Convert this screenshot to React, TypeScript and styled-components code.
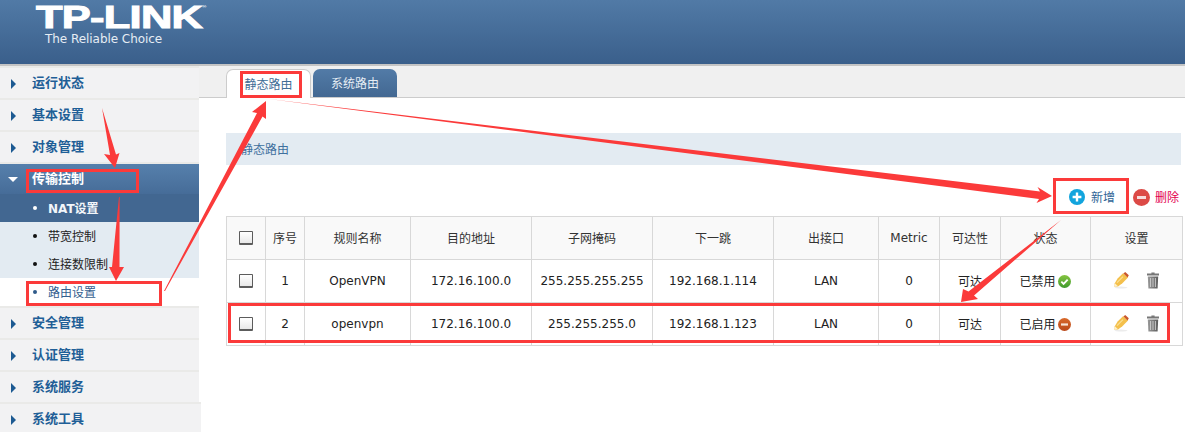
import React from 'react';
import styled, { createGlobalStyle } from 'styled-components';

const GlobalStyle = createGlobalStyle`
  html, body {
    margin: 0;
    padding: 0;
    background: #fff;
  }
  body {
    font-family: "DejaVu Sans", "Noto Sans CJK SC", sans-serif;
    font-size: 12px;
    color: #222;
  }
`;

const Page = styled.div`
  position: relative;
  width: 1185px;
  height: 432px;
  overflow: hidden;
  display: flex;
  flex-direction: column;
`;

const Header = styled.header`
  flex: none;
  height: 61px;
  padding: 3px 0 0 36px;
  border-bottom: 2px solid #c4c4c4;
  background: linear-gradient(#517aa6, #3a5f8b);
  color: #fff;
`;

const Logo = styled.div`
  height: 29px;
  font-family: "Liberation Sans", Arial, sans-serif;
  font-weight: 700;
  font-size: 31px;
  line-height: 29px;
  letter-spacing: -0.5px;
  -webkit-text-stroke: 1px #fff;
  transform: scaleX(1.4);
  transform-origin: left top;
  white-space: nowrap;
`;

const Registered = styled.sup`
  font-size: 4px;
  -webkit-text-stroke: 0;
  vertical-align: 20px;
  line-height: 0;
`;

const Tagline = styled.div`
  margin: 0 0 0 9px;
  font-size: 12px;
  line-height: 14px;
  letter-spacing: -0.05px;
  color: #e6edf4;
`;

const Body = styled.div`
  flex: 1;
  display: flex;
  min-height: 0;
`;

const Sidebar = styled.nav`
  flex: none;
  width: 199px;
  background: #f2f2f3;
`;

const MenuHead = styled.div<{ $open?: boolean }>`
  height: 30px;
  border-top: 2px solid #eaeae8;
  display: flex;
  align-items: center;
  padding-left: ${(p) => (p.$open ? 8 : 11)}px;
  gap: ${(p) => (p.$open ? 14 : 16)}px;
  font-size: 13px;
  font-weight: 700;
  color: ${(p) => (p.$open ? '#fff' : '#1f5f97')};
  background: ${(p) => (p.$open ? 'linear-gradient(#5680ac, #466c98)' : 'transparent')};
  &:last-child {
    margin-right: -2px;
    background: #f2f2f3;
  }
`;

const MenuLabel = styled.span`
  margin-top: -3px;
`;

const ArrowRight = styled.span`
  width: 0;
  height: 0;
  border-left: 5px solid #1d5a92;
  border-top: 5.5px solid transparent;
  border-bottom: 5.5px solid transparent;
  margin-top: 2px;
`;

const ArrowDown = styled.span`
  width: 0;
  height: 0;
  border-top: 5px solid #fff;
  border-left: 5px solid transparent;
  border-right: 5px solid transparent;
`;

const SubItem = styled.div<{ $kind: 'head' | 'plain' | 'active' }>`
  height: 28px;
  display: flex;
  align-items: center;
  padding-left: 33px;
  gap: 11px;
  font-weight: ${(p) => (p.$kind === 'head' ? 700 : 400)};
  color: ${(p) => (p.$kind === 'head' ? '#f2f6fa' : p.$kind === 'active' ? '#34608f' : '#222')};
  background: ${(p) => (p.$kind === 'head' ? '#426791' : p.$kind === 'active' ? '#fff' : '#e3ebf2')};
  &::before {
    content: '';
    width: 4px;
    height: 4px;
    border-radius: 50%;
    background: ${(p) => (p.$kind === 'head' ? '#fff' : p.$kind === 'active' ? '#2f5a8a' : '#111')};
  }
`;

const SubLabel = styled.span`
  margin-top: -2px;
`;

/* chinese glyphs sit a pixel low on the latin baseline */
const Cjk = styled.span`
  display: inline-block;
  transform: translateY(-1px);
`;

const Main = styled.main`
  flex: 1;
  min-width: 0;
  display: flex;
  flex-direction: column;
`;

const TabStrip = styled.div`
  flex: none;
  height: 28px;
  padding: 3px 0 0 27px;
  background: #f0f0f0;
  border-bottom: 1px solid #cccccc;
  display: flex;
  gap: 2px;
`;

const Tab = styled.div<{ $active?: boolean }>`
  box-sizing: border-box;
  width: ${(p) => (p.$active ? 85 : 84)}px;
  height: ${(p) => (p.$active ? 29 : 28)}px;
  border-radius: 7px 7px 0 0;
  display: flex;
  align-items: center;
  justify-content: center;
  color: ${(p) => (p.$active ? '#3f6d96' : '#e6edf4')};
  background: ${(p) => (p.$active ? '#fff' : 'linear-gradient(#527ba7, #436892)')};
  border: ${(p) => (p.$active ? '1px solid #cccccc' : '0')};
  border-bottom: 0;
`;

const Content = styled.div`
  padding: 35px 3px 0 27px;
`;

const SectionBar = styled.div`
  width: 955px;
  height: 32px;
  padding-left: 15px;
  box-sizing: border-box;
  display: flex;
  align-items: center;
  background: #e3ebf2;
  color: #3f709e;
`;

const Toolbar = styled.div`
  height: 51px;
  width: 956px;
  padding-top: 24px;
  box-sizing: border-box;
  display: flex;
  justify-content: flex-end;
  align-items: flex-start;
  gap: 18px;
  padding-right: 3px;
`;

const ToolButton = styled.div<{ $danger?: boolean }>`
  display: flex;
  align-items: center;
  gap: ${(p) => (p.$danger ? 5 : 6)}px;
  height: 16px;
  color: ${(p) => (p.$danger ? '#e3004f' : '#2f6496')};
`;

const Table = styled.table`
  width: 956px;
  table-layout: fixed;
  border-collapse: collapse;
  border-spacing: 0;
`;

const Th = styled.th`
  height: 42px;
  padding: 0;
  border: 1px solid #d8d8d8;
  background: #f9f9f9;
  font-weight: 400;
  color: #333;
  text-align: center;
`;

const Td = styled.td`
  height: 42px;
  padding: 0;
  border: 1px solid #d8d8d8;
  text-align: center;
  color: #222;
`;

const CheckBox = styled.span`
  display: inline-block;
  vertical-align: middle;
  box-sizing: border-box;
  width: 14px;
  height: 14px;
  border: 1px solid #5c5c5c;
  border-bottom-width: 2px;
  border-radius: 1px;
  background: linear-gradient(#ffffff, #e8e8e8);
`;

const StatusCell = styled.span`
  display: inline-flex;
  align-items: center;
  gap: 2px;
  padding-right: 1px;
`;

const Actions = styled.span`
  display: inline-flex;
  align-items: center;
  gap: 18px;
  padding: 1px 0 0 0;
`;

const Overlay = styled.svg`
  position: absolute;
  left: 0;
  top: 0;
  pointer-events: none;
`;

const PlusIcon = () => (
  <svg width="16" height="16" viewBox="0 0 16 16">
    <circle cx="8" cy="8" r="8" fill="#12a4dd" />
    <path d="M8 3.6v8.8M3.6 8h8.8" stroke="#fff" strokeWidth="2.4" />
  </svg>
);

const MinusIcon = () => (
  <svg width="17" height="17" viewBox="0 0 17 17">
    <circle cx="8.5" cy="8.5" r="8.5" fill="#dc4a46" />
    <path d="M4 8.5h9" stroke="#f6dcdc" strokeWidth="3" />
  </svg>
);

const CheckIcon = () => (
  <svg width="13" height="13" viewBox="0 0 14 14">
    <defs>
      <linearGradient id="okFill" x1="0" y1="0" x2="0" y2="1">
        <stop offset="0" stopColor="#86c440" />
        <stop offset="1" stopColor="#3f9a2e" />
      </linearGradient>
    </defs>
    <circle cx="7" cy="7" r="7" fill="url(#okFill)" />
    <path d="M3.6 7.2l2.4 2.4 4.4-4.6" fill="none" stroke="#fff" strokeWidth="2" />
  </svg>
);

const StopIcon = () => (
  <svg width="13" height="13" viewBox="0 0 14 14">
    <defs>
      <linearGradient id="stopFill" x1="0" y1="0" x2="0" y2="1">
        <stop offset="0" stopColor="#d8692a" />
        <stop offset="1" stopColor="#b9481a" />
      </linearGradient>
    </defs>
    <circle cx="7" cy="7" r="7" fill="url(#stopFill)" />
    <path d="M3.2 7h7.6" stroke="#f7e3d5" strokeWidth="2.4" />
  </svg>
);

const PencilIcon = () => (
  <svg width="15" height="17" viewBox="0 0 15 17">
    <ellipse cx="7" cy="15.6" rx="6.5" ry="1" fill="#ececec" />
    <path d="M3.6 6.4L9 1.2l5 4.2-5.6 5.8L4 14.6l-3.6.4.4-3.8z" fill="#f4c04c" />
    <path d="M9.4 1.6L11.2 0l3.6 3.2-1.2 2.2z" fill="#c9572c" />
    <path d="M.4 15l.5-3.8 3.1 3.1z" fill="#fdf0cc" />
    <path d="M3 10.6l6-6" stroke="#fadf94" strokeWidth="1.3" />
  </svg>
);

const TrashIcon = () => (
  <svg width="12" height="17" viewBox="0 0 12 17">
    <defs>
      <linearGradient id="binFill" x1="0" y1="0" x2="1" y2="0">
        <stop offset="0" stopColor="#9a9a9a" />
        <stop offset="1" stopColor="#5c5c5c" />
      </linearGradient>
    </defs>
    <path d="M4.4 1.6V.4h3.2v1.2H12v2H0v-2z" fill="#777" />
    <path d="M.8 4.4h10.4l-.6 12H1.4z" fill="url(#binFill)" />
    <path d="M3.6 6v9M6 6v9M8.4 6v9" stroke="#d4d4d4" strokeWidth="0.9" />
  </svg>
);

const columns = [39, 39, 106, 121, 121, 121, 105, 61, 61, 90, 92];
const heads = ['序号', '规则名称', '目的地址', '子网掩码', '下一跳', '出接口', 'Metric', '可达性', '状态', '设置'];

const rows = [
  { id: 1, name: 'OpenVPN', dest: '172.16.100.0', mask: '255.255.255.255', hop: '192.168.1.114', status: '已禁用', on: false },
  { id: 2, name: 'openvpn', dest: '172.16.100.0', mask: '255.255.255.0', hop: '192.168.1.123', status: '已启用', on: true },
];

const topMenus = ['运行状态', '基本设置', '对象管理'];
const bottomMenus = ['安全管理', '认证管理', '系统服务', '系统工具'];

export default function App() {
  return (
    <Page>
      <GlobalStyle />
      <Header>
        <Logo>
          TP-LINK<Registered>®</Registered>
        </Logo>
        <Tagline>The Reliable Choice</Tagline>
      </Header>
      <Body>
        <Sidebar>
          {topMenus.map((m) => (
            <MenuHead key={m}>
              <ArrowRight />
              <MenuLabel>{m}</MenuLabel>
            </MenuHead>
          ))}
          <MenuHead $open>
            <ArrowDown />
            <MenuLabel>传输控制</MenuLabel>
          </MenuHead>
          <SubItem $kind="head">
            <SubLabel>NAT设置</SubLabel>
          </SubItem>
          <SubItem $kind="plain">
            <SubLabel>带宽控制</SubLabel>
          </SubItem>
          <SubItem $kind="plain">
            <SubLabel>连接数限制</SubLabel>
          </SubItem>
          <SubItem $kind="active">
            <SubLabel>路由设置</SubLabel>
          </SubItem>
          {bottomMenus.map((m) => (
            <MenuHead key={m}>
              <ArrowRight />
              <MenuLabel>{m}</MenuLabel>
            </MenuHead>
          ))}
        </Sidebar>
        <Main>
          <TabStrip>
            <Tab $active>
              <Cjk>静态路由</Cjk>
            </Tab>
            <Tab>
              <Cjk>系统路由</Cjk>
            </Tab>
          </TabStrip>
          <Content>
            <SectionBar>
              <Cjk>静态路由</Cjk>
            </SectionBar>
            <Toolbar>
              <ToolButton>
                <PlusIcon />
                <Cjk>新增</Cjk>
              </ToolButton>
              <ToolButton $danger>
                <MinusIcon />
                <Cjk>删除</Cjk>
              </ToolButton>
            </Toolbar>
            <Table>
              <colgroup>
                {columns.map((w, i) => (
                  <col key={i} style={{ width: w }} />
                ))}
              </colgroup>
              <thead>
                <tr>
                  <Th>
                    <CheckBox />
                  </Th>
                  {heads.map((h) => (
                    <Th key={h}>{h === 'Metric' ? h : <Cjk>{h}</Cjk>}</Th>
                  ))}
                </tr>
              </thead>
              <tbody>
                {rows.map((r) => (
                  <tr key={r.id}>
                    <Td>
                      <CheckBox />
                    </Td>
                    <Td>{r.id}</Td>
                    <Td>{r.name}</Td>
                    <Td>{r.dest}</Td>
                    <Td>{r.mask}</Td>
                    <Td>{r.hop}</Td>
                    <Td>LAN</Td>
                    <Td>0</Td>
                    <Td>
                      <Cjk>可达</Cjk>
                    </Td>
                    <Td>
                      <StatusCell>
                        <Cjk>{r.status}</Cjk>
                        {r.on ? <StopIcon /> : <CheckIcon />}
                      </StatusCell>
                    </Td>
                    <Td>
                      <Actions>
                        <PencilIcon />
                        <TrashIcon />
                      </Actions>
                    </Td>
                  </tr>
                ))}
              </tbody>
            </Table>
          </Content>
        </Main>
      </Body>
      {/* red annotations drawn over the screenshot */}
      <Overlay width="1185" height="432" viewBox="0 0 1185 432">
        <g fill="none" stroke="#fb3a3a" strokeWidth="3">
          <rect x="241.5" y="72.5" width="59" height="24" />
          <rect x="27.5" y="170.5" width="110" height="21" />
          <rect x="27.5" y="282.5" width="133" height="22" />
          <rect x="229.5" y="304.5" width="939" height="37" />
          <rect x="1054.5" y="179.5" width="73" height="33" />
        </g>
        <g fill="#fb3a3a">
          <polygon points="102,108 116,154.5 119.5,153 115,168 104,154 110,155" />
          <polygon points="119,197 112,267 109,267 116,281 124,267 119.5,267 119.6,197" />
          <polygon points="164,291 257,113 252,112 266,101 266,119 262.5,116.5 165,291" />
          <polygon points="269,99 1040,191.5 1037.5,187 1052,196 1036.5,203 1039,199" />
          <polygon points="1061,220 974,295.5 978,299 961,302 963,289 968.5,291.5" />
        </g>
      </Overlay>
    </Page>
  );
}
